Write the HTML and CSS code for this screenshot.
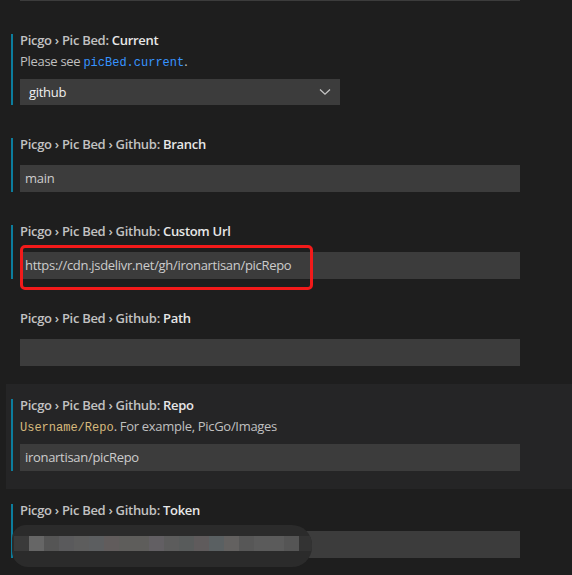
FILE: index.html
```html
<!DOCTYPE html>
<html>
<head>
<meta charset="utf-8">
<link rel="stylesheet" href="styles.css">
</head>
<body>
<div class="list">
  <div class="prev-end"><div class="prev-input"></div></div>

  <div class="row">
    <div class="item modified">
      <div class="title"><span class="cat">Picgo › Pic Bed: </span><span class="label">Current</span></div>
      <div class="desc">Please see <code class="link">picBed.current</code>.</div>
      <div class="select">
        <span>github</span>
        <svg class="chev" width="12" height="8" viewBox="0 0 12 8"><path d="M1 1.5 L6 6.2 L11 1.5" fill="none" stroke="#c5c5c5" stroke-width="1.3"/></svg>
      </div>
    </div>
  </div>

  <div class="row">
    <div class="item modified">
      <div class="title"><span class="cat">Picgo › Pic Bed › Github: </span><span class="label">Branch</span></div>
      <div class="input">main</div>
    </div>
  </div>

  <div class="row">
    <div class="item modified">
      <div class="title"><span class="cat">Picgo › Pic Bed › Github: </span><span class="label">Custom Url</span></div>
      <div class="input">https://cdn.jsdelivr.net/gh/ironartisan/picRepo</div>
      <div class="annot"></div>
    </div>
  </div>

  <div class="row">
    <div class="item">
      <div class="title"><span class="cat">Picgo › Pic Bed › Github: </span><span class="label">Path</span></div>
      <div class="input"></div>
    </div>
  </div>

  <div class="row hover">
    <div class="item modified">
      <div class="title"><span class="cat">Picgo › Pic Bed › Github: </span><span class="label">Repo</span></div>
      <div class="desc"><code class="pre">Username/Repo</code>. For example, PicGo/Images</div>
      <div class="input">ironartisan/picRepo</div>
    </div>
  </div>

  <div class="row">
    <div class="item modified">
      <div class="title"><span class="cat">Picgo › Pic Bed › Github: </span><span class="label">Token</span></div>
      <div class="input"></div>
      <div class="mosaic">
        <div class="strip">
          <i style="background:#3a3a3a"></i><i style="background:#666"></i><i style="background:#555"></i><i style="background:#5a5a5c"></i><i style="background:#5d5d5d"></i><i style="background:#5c5e60"></i><i style="background:#615c5c"></i><i style="background:#5e5d5b"></i><i style="background:#5e5d5b"></i><i style="background:#625f63"></i><i style="background:#5c5c5c"></i><i style="background:#585b5b"></i><i style="background:#5f5b5c"></i><i style="background:#5a6062"></i><i style="background:#636160"></i><i style="background:#575757"></i><i style="background:#5b5b5b"></i><i style="background:#5b5b5b"></i><i style="background:#555"></i><i style="background:#333"></i>
        </div>
      </div>
    </div>
  </div>
</div>
</body>
</html>
```

FILE: styles.css
```css
html, body {
  margin: 0;
  padding: 0;
  background: #1e1e1e;
  height: 100%;
  overflow: hidden;
}
body {
  font-family: "Open Sans", "Noto Sans", sans-serif;
  font-size: 13px;
  letter-spacing: -0.3px;
  color: #cccccc;
}
.list {
  display: flex;
  flex-direction: column;
}
.prev-end {
  height: 19px;
  padding-left: 20px;
}
.prev-input {
  width: 500px;
  height: 1px;
  background: #3c3c3c;
}
.row {
  margin-left: 6px;
  padding: 15px 0 18px 5px;
}
.row.hover {
  background: #252526;
}
.item {
  position: relative;
  padding-left: 7px;
  border-left: 2px solid transparent;
}
.item.modified {
  border-left-color: #0c7d9d;
}
.title {
  height: 12px;
  line-height: 12px;
  padding-bottom: 15px;
  font-weight: 600;
  white-space: nowrap;
}
.cat {
  color: #c2c2c2;
}
.label {
  color: #e7e7e7;
}
.desc {
  margin-top: -6px;
  height: 12px;
  line-height: 12px;
  padding-bottom: 12px;
  color: #c0c0c0;
  white-space: nowrap;
}
code {
  font-family: "Liberation Mono", "DejaVu Sans Mono", monospace;
  font-size: 12px;
  letter-spacing: 0;
}
.link { color: #3794ff; }
.pre { color: #d7ba7d; }
.select {
  width: 320px;
  height: 26px;
  box-sizing: border-box;
  background: #3c3c3c;
  color: #f0f0f0;
  display: flex;
  align-items: center;
  justify-content: space-between;
  padding: 0 9px 0 9px;
}
.chev { display: block; }
.input {
  width: 500px;
  height: 27px;
  box-sizing: border-box;
  background: #3c3c3c;
  color: #cccccc;
  line-height: 27px;
  padding-left: 5px;
  white-space: nowrap;
}
.annot {
  position: absolute;
  left: 7px;
  top: 20px;
  width: 293px;
  height: 45px;
  box-sizing: border-box;
  border: 3px solid #f21a1a;
  border-radius: 5px;
}
.mosaic {
  position: absolute;
  left: -1px;
  top: 21px;
  width: 300px;
  height: 42px;
  border-radius: 14px 20px 20px 16px;
  background: #2b2b2b;
  overflow: hidden;
}
.strip {
  display: flex;
  height: 15px;
  margin-top: 11px;
  padding-left: 2px;
}
.strip i {
  display: block;
  flex: none;
  width: 15px;
  height: 15px;
}
```
